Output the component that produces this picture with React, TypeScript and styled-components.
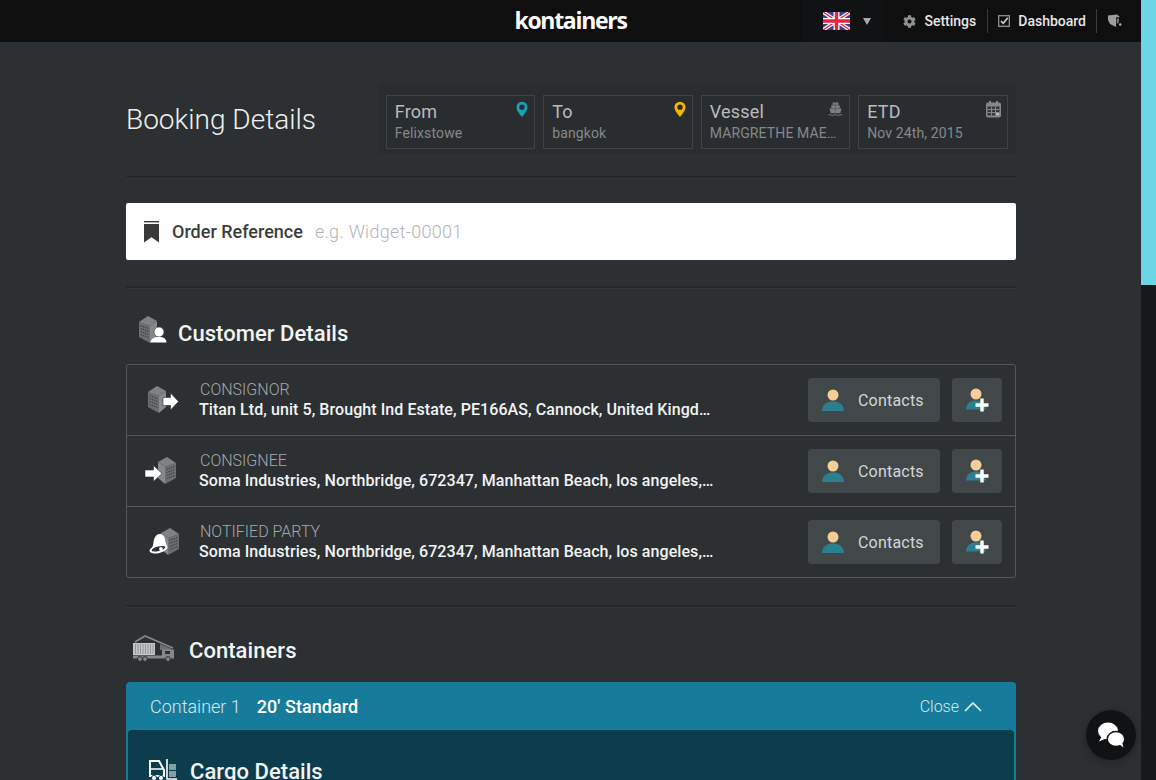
import React from "react";
import styled, { createGlobalStyle } from "styled-components";
import { FaCog } from "react-icons/fa";

const GlobalStyle = createGlobalStyle`
  html, body {
    margin: 0;
    padding: 0;
    height: 780px;
    overflow: hidden;
    background: #2c3033;
    font-family: Roboto, "Liberation Sans", sans-serif;
  }
  * { box-sizing: border-box; }
`;

const Page = styled.div`
  display: flex;
  height: 780px;
  overflow: hidden;
`;

const Main = styled.div`
  width: 1141px;
  flex: none;
  background: #2c3033;
`;

const ScrollTrack = styled.div`
  width: 15px;
  flex: none;
  background: #171819;
`;

const ScrollThumb = styled.div`
  height: 285px;
  background: #6cd6e6;
`;

const TopBar = styled.header`
  height: 42px;
  background: #0f0f10;
  display: grid;
  grid-template-columns: 1fr auto 1fr;
  align-items: center;
`;

const Logo = styled.div`
  font-family: "Open Sans", sans-serif;
  font-weight: 700;
  font-size: 23px;
  letter-spacing: -1.3px;
  color: #fff;
  line-height: 40px;
  height: 42px;
`;

const Nav = styled.nav`
  display: flex;
  justify-content: flex-end;
  align-items: center;
  height: 42px;
  padding-right: 19px;
`;

const LangBox = styled.div`
  display: flex;
  align-items: center;
  width: 81px;
  height: 42px;
  padding-left: 20px;
  gap: 13px;
  background: #111213;
  margin-right: 19px;
`;

const Caret = styled.span`
  width: 0;
  height: 0;
  border-left: 4px solid transparent;
  border-right: 4px solid transparent;
  border-top: 7px solid #a9abac;
`;

const NavItem = styled.div`
  display: flex;
  align-items: center;
  gap: 8px;
  font-size: 14px;
  font-weight: 500;
  color: #e6e6e6;
  height: 42px;
`;

const NavDivider = styled.span<{ $before: number; $after: number }>`
  width: 1px;
  height: 24px;
  background: #3a3c3e;
  margin: 0 ${(p) => p.$after}px 0 ${(p) => p.$before}px;
`;

const Content = styled.main`
  width: 890px;
  margin-left: 126px;
`;

const BookingHead = styled.section`
  display: flex;
  justify-content: space-between;
  align-items: center;
  height: 136px;
  padding-top: 20px;
  border-bottom: 2px solid #25282b;
  box-shadow: 0 1px 0 #33373b;
`;

const PageTitle = styled.h1`
  margin: 0;
  font-size: 28px;
  font-weight: 300;
  color: #eef0f0;
`;

const InfoPanel = styled.div`
  display: flex;
  gap: 8px;
  padding: 11px 8.25px 5px 8px;
  height: 70px;
  background: #2a2d30;
  border-radius: 3px;
`;

const InfoCard = styled.div`
  position: relative;
  width: 149.5px;
  height: 54px;
  padding: 5px 8px;
  border: 1px solid #3f4347;
  overflow: hidden;
`;

const InfoLabel = styled.div`
  font-size: 18px;
  line-height: 21px;
  color: #b9bbbc;
  letter-spacing: 0.2px;
`;

const InfoValue = styled.div`
  margin-top: 2px;
  font-size: 14px;
  line-height: 18px;
  color: #85888a;
  letter-spacing: 0.12px;
  width: 127px;
  white-space: nowrap;
  overflow: hidden;
  text-overflow: ellipsis;
`;

const CardIcon = styled.svg`
  position: absolute;
  top: 5px;
  right: 6px;
`;

const OrderBar = styled.div`
  display: flex;
  align-items: center;
  height: 57px;
  margin-top: 25px;
  padding-left: 18px;
  background: #fff;
  border-radius: 2px;
`;

const OrderLabel = styled.span`
  margin-left: 13px;
  font-size: 18px;
  font-weight: 500;
  color: #3b3d3f;
`;

const OrderInput = styled.span`
  margin-left: 12px;
  font-size: 18px;
  font-weight: 300;
  color: #b4b4b4;
  letter-spacing: 0.3px;
`;

const Divider = styled.hr<{ $top: number }>`
  margin: ${(p) => p.$top}px 0 0;
  height: 2px;
  border: 0;
  background: #25282b;
  box-shadow: 0 1px 0 #33373b;
`;

const SectionHead = styled.div<{ $indent: number; $gap: number; $height: number; $top: number }>`
  display: flex;
  align-items: center;
  gap: ${(p) => p.$gap}px;
  height: ${(p) => p.$height}px;
  padding: ${(p) => p.$top}px 0 0 ${(p) => p.$indent}px;
`;

const HeadIcon = styled.span<{ $lift: number }>`
  display: flex;
  margin-bottom: ${(p) => p.$lift}px;
`;

const SectionTitle = styled.h2`
  margin: 0;
  font-size: 22px;
  font-weight: 500;
  letter-spacing: 0.05px;
  color: #f3f4f4;
`;

const PartyTable = styled.div`
  border: 1px solid #54585b;
  border-radius: 3px;
`;

const PartyRow = styled.div`
  display: flex;
  align-items: center;
  height: 71px;
  padding: 0 13px 0 20px;
  border-top: 1px solid #54585b;
  &:first-child {
    border-top: 0;
    height: 70px;
  }
`;

const PartyIcon = styled.div<{ $shift: number }>`
  display: flex;
  flex: none;
  width: ${(p) => 52 - p.$shift}px;
  margin-left: ${(p) => p.$shift}px;
`;

const PartyText = styled.div`
  flex: 1;
  min-width: 0;
`;

const PartyKind = styled.div`
  margin-bottom: 1px;
  padding-left: 1px;
  font-size: 16px;
  font-weight: 300;
  line-height: 19px;
  color: #a5a8aa;
`;

const PartyAddress = styled.div`
  width: 516px;
  font-size: 16px;
  font-weight: 500;
  line-height: 20px;
  letter-spacing: 0.07px;
  color: #f2f3f3;
  white-space: nowrap;
  overflow: hidden;
  text-overflow: ellipsis;
`;

const ContactButton = styled.div`
  display: flex;
  align-items: center;
  gap: 14px;
  width: 132px;
  height: 44px;
  padding-left: 14px;
  background: #42474a;
  border-radius: 4px;
  font-size: 16px;
  color: #d3d5d6;
  letter-spacing: 0.2px;
`;

const AddButton = styled.div`
  display: flex;
  align-items: center;
  justify-content: center;
  width: 50px;
  height: 44px;
  margin-left: 12px;
  background: #42474a;
  border-radius: 4px;
`;

const ContainerCard = styled.div`
  height: 98px;
  padding: 0 2px;
  background: #177c9b;
  border-radius: 4px 4px 0 0;
`;

const ContainerHead = styled.div`
  display: flex;
  align-items: center;
  height: 48px;
  padding: 0 32px 0 22px;
  color: #fff;
  font-size: 18px;
`;

const ContainerName = styled.span`
  font-weight: 300;
  color: #d5e9ef;
`;

const ContainerType = styled.span`
  margin-left: 16px;
  font-weight: 500;
  letter-spacing: 0.05px;
`;

const CloseToggle = styled.span`
  display: flex;
  align-items: center;
  gap: 5px;
  margin-left: auto;
  font-size: 16px;
  font-weight: 300;
  color: #d5e9ef;
`;

const CargoPanel = styled.div`
  display: flex;
  align-items: flex-start;
  gap: 12px;
  height: 50px;
  padding: 29px 0 0 21px;
  background: #0c3d4d;
  border-radius: 4px 4px 0 0;
`;

const ChatButton = styled.div`
  position: fixed;
  left: 1086px;
  top: 710px;
  width: 50px;
  height: 50px;
  display: flex;
  align-items: center;
  justify-content: center;
  border-radius: 50%;
  background: #111213;
  box-shadow: 0 2px 8px rgba(0, 0, 0, 0.3);
`;

const Flag = () => (
  <svg width="27" height="18" viewBox="0 0 27 18">
    <rect width="27" height="18" fill="#3b3f94" />
    <path d="M0 0L27 18M27 0L0 18" stroke="#fff" strokeWidth="3.6" />
    <path d="M0 0L27 18M27 0L0 18" stroke="#e8233f" strokeWidth="1.4" />
    <path d="M13.5 0V18M0 9H27" stroke="#fff" strokeWidth="6" />
    <path d="M13.5 0V18M0 9H27" stroke="#e8233f" strokeWidth="3.4" />
  </svg>
);

const CheckIcon = () => (
  <svg width="12" height="12" viewBox="0 0 12 12" fill="none">
    <rect x="0.7" y="0.7" width="10.6" height="10.6" stroke="#8f9192" strokeWidth="1.3" />
    <path d="M3 6l2.2 2.3L9.8 2.8" stroke="#d4d5d5" strokeWidth="1.5" />
  </svg>
);

const TagIcon = () => (
  <svg width="14" height="14" viewBox="0 0 14 14">
    <path d="M0 1.5L9 0.5L12 3L8 3.5V13L2 10L0 6Z" fill="#9b9d9e" />
    <path d="M8.5 5L11 4V8.5L8.5 10Z" fill="#6f7172" />
    <circle cx="12.2" cy="10.5" r="1.2" fill="#b5b6b7" />
  </svg>
);

const Pin = ({ color }: { color: string }) => (
  <CardIcon width="12" height="17" viewBox="0 0 13 18">
    <path
      fillRule="evenodd"
      d="M6.5 0.5A6 6 0 0 1 12.5 6.5C12.5 10 8.5 14.5 6.5 17.2C4.5 14.5 0.5 10 0.5 6.5A6 6 0 0 1 6.5 0.5ZM6.5 3.6A2.9 2.9 0 1 0 6.5 9.4A2.9 2.9 0 1 0 6.5 3.6Z"
      fill={color}
    />
  </CardIcon>
);

const ShipIcon = () => (
  <CardIcon width="15" height="16" viewBox="0 0 16 16">
    <path d="M5 1H11V4H12.5V7.5H14.5L13 12.5H3L1.5 7.5H3.5V4H5Z" fill="#7d8082" />
    <path d="M7.7 1V12M5 4H11M3.5 7.5H12.5" stroke="#4e5254" strokeWidth="0.7" />
    <path d="M0.5 14.5Q2 13.3 3.5 14.5T6.5 14.5T9.5 14.5T12.5 14.5T15.5 14.5" stroke="#7d8082" fill="none" />
  </CardIcon>
);

const CalendarIcon = () => (
  <CardIcon width="15" height="17" viewBox="0 0 15 17">
    <rect x="0" y="1.5" width="15" height="15" rx="2" fill="#85888a" />
    <rect x="3" y="0" width="2" height="3" fill="#85888a" />
    <rect x="10" y="0" width="2" height="3" fill="#85888a" />
    <path d="M1.5 5.5H13.5V14.5H1.5Z" fill="#33373a" />
    <path d="M1.5 8.5H13.5M1.5 11.5H13.5M5.5 5.5V14.5M9.5 5.5V14.5" stroke="#85888a" strokeWidth="1" />
    <rect x="10" y="12" width="3.5" height="2.5" fill="#b8babb" />
  </CardIcon>
);

const BookmarkIcon = () => (
  <svg width="15" height="22" viewBox="0 0 15 22">
    <rect width="15" height="1.4" fill="#3a3a3a" />
    <path d="M0 3H15V21.5L7.5 16.3L0 21.5Z" fill="#3a3a3a" />
  </svg>
);

// isometric office block used by the customer icons
const Block = ({ x = 0, y = 0, flip = false }: { x?: number; y?: number; flip?: boolean }) => (
  <g transform={`translate(${x} ${y})${flip ? " translate(18 0) scale(-1 1)" : ""}`}>
    <path d="M0 6L11 10V27L0 21Z" fill="#6b6f72" />
    <path d="M11 10L18 5V21L11 27Z" fill="#85898b" />
    <path d="M0 6L9 0L18 5L11 10Z" fill="#7e8285" />
    <path
      d="M1.500 9.500L9.500 12.500M1.500 12.500L9.500 15.500M1.500 15.500L9.500 18.500M1.500 18.500L9.500 21.500"
      stroke="#44474a"
      strokeWidth="1.3"
      strokeDasharray="1.6 0.8"
    />
  </g>
);

const CustomerIcon = () => (
  <svg width="30" height="30" viewBox="0 0 30 30">
    <Block x={1} y={1} />
    <circle cx="21" cy="17" r="5" fill="#fff" stroke="#2c3033" strokeWidth="0.6" />
    <path d="M12.500 27.500C13 23.500 16 22 21 22S28 23.500 28.500 27.500Z" fill="#fff" />
  </svg>
);

const ShipperIcon = () => (
  <svg width="32" height="28" viewBox="0 0 32 28">
    <Block x={1} y={0} />
    <path d="M16 11.500H23.500V7L31.500 15.500L23.500 24V19.500H16Z" fill="#fff" stroke="#2c3033" strokeWidth="0.6" />
  </svg>
);

const ReceiverIcon = () => (
  <svg width="32" height="28" viewBox="0 0 32 28">
    <Block x={13} y={0} flip />
    <path d="M0 13H8.500V8.500L17 16.500L8.500 24.500V20H0Z" fill="#fff" stroke="#2c3033" strokeWidth="0.6" />
  </svg>
);

const NotifyIcon = () => (
  <svg width="32" height="28" viewBox="0 0 32 28">
    <Block x={12} y={0} flip />
    <path d="M10 6C13.500 5.500 15.500 8 16 11.500C16.500 14.500 17.500 17 18.500 18.500L2 22.500C3 20.500 4 18 4.500 14.500C5 10.500 6.500 6.800 10 6Z" fill="#fff" />
    <ellipse cx="9.500" cy="21" rx="9.200" ry="4" fill="#fff" transform="rotate(-14 9.500 21)" />
    <ellipse cx="9.500" cy="20.800" rx="7" ry="2.300" fill="#2c3033" transform="rotate(-14 9.500 21)" />
    <circle cx="12" cy="21" r="1.900" fill="#fff" />
  </svg>
);

const PersonIcon = () => (
  <svg width="22" height="22" viewBox="0 0 22 22">
    <circle cx="11" cy="6" r="5.500" fill="#f5cd96" />
    <path d="M0 22C0.500 15 5 12.500 11 12.500S21.500 15 22 22Z" fill="#2b8090" />
  </svg>
);

const PersonAddIcon = () => (
  <svg width="23" height="24" viewBox="0 0 23 24">
    <circle cx="10" cy="6" r="5.500" fill="#f5cd96" />
    <path d="M0 21.500C0.500 15 4.500 12.500 10 12.500S19.500 15 20 21.500Z" fill="#2b8090" />
    <path d="M16 10.500V23.500M9.500 17H22.500" stroke="#fff" strokeWidth="3.400" />
  </svg>
);

const TruckIcon = () => (
  <svg width="44" height="27" viewBox="0 0 44 27">
    <path d="M3 7L13 1L41 13" fill="none" stroke="#85888a" strokeWidth="1.600" />
    <path d="M28 9L39 13.500V15H28Z" fill="#6d7073" />
    <rect x="1" y="8" width="22" height="12" fill="#c4c5c6" />
    <path d="M3.500 9V19M6 9V19M8.500 9V19M11 9V19M13.500 9V19M16 9V19M18.500 9V19M21 9V19" stroke="#85888a" strokeWidth="0.800" />
    <path d="M1 20.500H30V14.500H42V23.500H1Z" fill="#85888a" />
    <rect x="33" y="16" width="5" height="3" fill="#2c3033" />
    <circle cx="8" cy="24" r="2.400" fill="#85888a" stroke="#2c3033" />
    <circle cx="13" cy="24" r="2.400" fill="#85888a" stroke="#2c3033" />
    <circle cx="36" cy="24" r="2.400" fill="#85888a" stroke="#2c3033" />
  </svg>
);

const ChevronUp = () => (
  <svg width="18" height="11" viewBox="0 0 18 11" fill="none">
    <path d="M1 10L9 2L17 10" stroke="#e3f0f4" strokeWidth="1.6" />
  </svg>
);

const ForkliftIcon = () => (
  <svg width="29" height="22" viewBox="0 0 29 22" fill="none">
    <path d="M1 2H10L15 11V17H1Z" stroke="#fff" strokeWidth="2" />
    <path d="M1 10H14" stroke="#fff" strokeWidth="1.500" />
    <circle cx="5" cy="19" r="2.600" fill="#fff" stroke="#0c3d4d" />
    <circle cx="12" cy="19" r="2.600" fill="#fff" stroke="#0c3d4d" />
    <path d="M18 0V20H28" stroke="#fff" strokeWidth="1.600" />
    <rect x="20" y="5" width="7" height="6" fill="#7fa0aa" />
    <rect x="20" y="12" width="7" height="6" fill="#7fa0aa" />
  </svg>
);

const ChatIcon = () => (
  <svg width="27" height="26" viewBox="0 0 27 26">
    <ellipse cx="10" cy="9" rx="10" ry="8.500" fill="#fff" />
    <path d="M4 14L1 19.500L9 16Z" fill="#fff" />
    <ellipse cx="18" cy="17" rx="8.800" ry="7.400" fill="#fff" stroke="#111213" strokeWidth="1.500" />
    <path d="M21 22L25.500 25.500L24 20Z" fill="#fff" />
  </svg>
);

type Party = {
  kind: string;
  address: string;
  shift: number;
  icon: React.ReactNode;
};

const parties: Party[] = [
  {
    kind: "CONSIGNOR",
    address: "Titan Ltd, unit 5, Brought Ind Estate, PE166AS, Cannock, United Kingdom",
    shift: 0,
    icon: <ShipperIcon />,
  },
  {
    kind: "CONSIGNEE",
    address: "Soma Industries, Northbridge, 672347, Manhattan Beach, los angeles, United States",
    shift: -2,
    icon: <ReceiverIcon />,
  },
  {
    kind: "NOTIFIED PARTY",
    address: "Soma Industries, Northbridge, 672347, Manhattan Beach, los angeles, United States",
    shift: 2,
    icon: <NotifyIcon />,
  },
];

export default function App() {
  return (
    <>
      <GlobalStyle />
      <Page>
        <Main>
          <TopBar>
            <span />
            <Logo>kontainers</Logo>
            <Nav>
              <LangBox>
                <Flag />
                <Caret />
              </LangBox>
              <NavItem>
                <FaCog size={13} color="#8f9192" />
                Settings
              </NavItem>
              <NavDivider $before={11} $after={10} />
              <NavItem>
                <CheckIcon />
                Dashboard
              </NavItem>
              <NavDivider $before={10} $after={11} />
              <NavItem>
                <TagIcon />
              </NavItem>
            </Nav>
          </TopBar>
          <Content>
            <BookingHead>
              <PageTitle>Booking Details</PageTitle>
              <InfoPanel>
                <InfoCard>
                  <InfoLabel>From</InfoLabel>
                  <InfoValue>Felixstowe</InfoValue>
                  <Pin color="#1aa3b8" />
                </InfoCard>
                <InfoCard>
                  <InfoLabel>To</InfoLabel>
                  <InfoValue>bangkok</InfoValue>
                  <Pin color="#f2b705" />
                </InfoCard>
                <InfoCard>
                  <InfoLabel>Vessel</InfoLabel>
                  <InfoValue>MARGRETHE MAERSK</InfoValue>
                  <ShipIcon />
                </InfoCard>
                <InfoCard>
                  <InfoLabel>ETD</InfoLabel>
                  <InfoValue>Nov 24th, 2015</InfoValue>
                  <CalendarIcon />
                </InfoCard>
              </InfoPanel>
            </BookingHead>
            <OrderBar>
              <BookmarkIcon />
              <OrderLabel>Order Reference</OrderLabel>
              <OrderInput>e.g. Widget-00001</OrderInput>
            </OrderBar>
            <Divider $top={26} />
            <SectionHead $indent={12} $gap={10} $height={76} $top={14}>
              <HeadIcon $lift={6}>
                <CustomerIcon />
              </HeadIcon>
              <SectionTitle>Customer Details</SectionTitle>
            </SectionHead>
            <PartyTable>
              {parties.map((party) => (
                <PartyRow key={party.kind}>
                  <PartyIcon $shift={party.shift}>{party.icon}</PartyIcon>
                  <PartyText>
                    <PartyKind>{party.kind}</PartyKind>
                    <PartyAddress>{party.address}</PartyAddress>
                  </PartyText>
                  <ContactButton>
                    <PersonIcon />
                    Contacts
                  </ContactButton>
                  <AddButton>
                    <PersonAddIcon />
                  </AddButton>
                </PartyRow>
              ))}
            </PartyTable>
            <Divider $top={27} />
            <SectionHead $indent={6} $gap={13} $height={75} $top={11}>
              <HeadIcon $lift={4}>
                <TruckIcon />
              </HeadIcon>
              <SectionTitle>Containers</SectionTitle>
            </SectionHead>
            <ContainerCard>
              <ContainerHead>
                <ContainerName>Container 1</ContainerName>
                <ContainerType>20' Standard</ContainerType>
                <CloseToggle>
                  Close
                  <ChevronUp />
                </CloseToggle>
              </ContainerHead>
              <CargoPanel>
                <ForkliftIcon />
                <SectionTitle>Cargo Details</SectionTitle>
              </CargoPanel>
            </ContainerCard>
          </Content>
        </Main>
        <ScrollTrack>
          <ScrollThumb />
        </ScrollTrack>
      </Page>
      <ChatButton>
        <ChatIcon />
      </ChatButton>
    </>
  );
}
